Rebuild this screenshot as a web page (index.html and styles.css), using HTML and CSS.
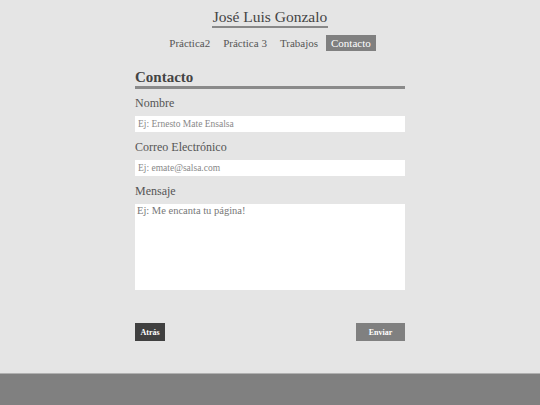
FILE: index.html
```html
<!DOCTYPE html>
<html lang="es">
<head>
<meta charset="utf-8">
<title>Contacto</title>
<link rel="stylesheet" href="styles.css">
</head>
<body>
<header class="site-header">
  <h1 class="site-title">José Luis Gonzalo</h1>
  <nav class="nav">
    <a class="nav-item" href="#">Práctica2</a>
    <a class="nav-item" href="#">Práctica 3</a>
    <a class="nav-item" href="#">Trabajos</a>
    <a class="nav-item active" href="#">Contacto</a>
  </nav>
</header>
<main class="content">
  <h2 class="section-title">Contacto</h2>
  <form class="form">
    <label class="label" for="nombre">Nombre</label>
    <input class="field" id="nombre" type="text" placeholder="Ej: Ernesto Mate Ensalsa">
    <label class="label" for="correo">Correo Electrónico</label>
    <input class="field" id="correo" type="email" placeholder="Ej: emate@salsa.com">
    <label class="label" for="mensaje">Mensaje</label>
    <textarea class="area" id="mensaje" placeholder="Ej: Me encanta tu página!"></textarea>
    <div class="actions">
      <button class="btn btn-back" type="button">Atrás</button>
      <button class="btn btn-send" type="submit">Enviar</button>
    </div>
  </form>
</main>
<footer class="footer"></footer>
</body>
</html>
```
FILE: styles.css
```css
html, body { height: 100%; }
body {
  margin: 0;
  background: #e5e5e5;
  font-family: "Liberation Serif", "DejaVu Serif", serif;
  color: #444;
  display: flex;
  flex-direction: column;
}
.site-header {
  display: flex;
  flex-direction: column;
  align-items: center;
  padding-top: 8px;
}
.site-title {
  margin: 0;
  font-size: 15.5px;
  font-weight: normal;
  line-height: 18px;
  color: #444;
  border-bottom: 2px solid #888;
  padding: 0 1px;
}
.nav {
  display: flex;
  gap: 3px;
  margin-top: 7px;
}
.nav-item {
  font-size: 11px;
  line-height: 16px;
  padding: 0 5px;
  color: #555;
  text-decoration: none;
}
.nav-item.active {
  background: #808080;
  color: #fff;
}
.content {
  width: 270px;
  margin: 17px auto 0;
}
.section-title {
  margin: 0;
  font-size: 15px;
  line-height: 18px;
  font-weight: bold;
  color: #444;
  border-bottom: 3px solid #8a8a8a;
}
.form {
  display: flex;
  flex-direction: column;
}
.label {
  font-size: 12px;
  line-height: 16px;
  color: #555;
  margin-top: 7px;
  margin-bottom: 5px;
}
.form .label:first-child { margin-top: 6px; }
.field {
  box-sizing: border-box;
  height: 16px;
  border: none;
  background: #fff;
  padding: 0 3px;
  font-family: "Liberation Serif", serif;
  font-size: 9.5px;
  color: #444;
  outline: none;
}
.field::placeholder { color: #888; }
.area {
  box-sizing: border-box;
  height: 86px;
  border: none;
  background: #fff;
  padding: 1px 2px;
  font-family: "Liberation Serif", serif;
  font-size: 10.5px;
  color: #444;
  resize: none;
  outline: none;
}
.area::placeholder { color: #777; }
.actions {
  display: flex;
  justify-content: space-between;
  margin-top: 33px;
}
.btn {
  height: 18px;
  border: none;
  font-family: "Liberation Serif", serif;
  font-weight: bold;
  font-size: 8px;
  color: #fff;
  padding: 0;
}
.btn-back { width: 30px; background: #404040; }
.btn-send { width: 49px; background: #808080; }
.footer {
  margin-top: auto;
  height: 31px;
  background: #808080;
  border-top: 1px solid #b0b0b0;
}
```
